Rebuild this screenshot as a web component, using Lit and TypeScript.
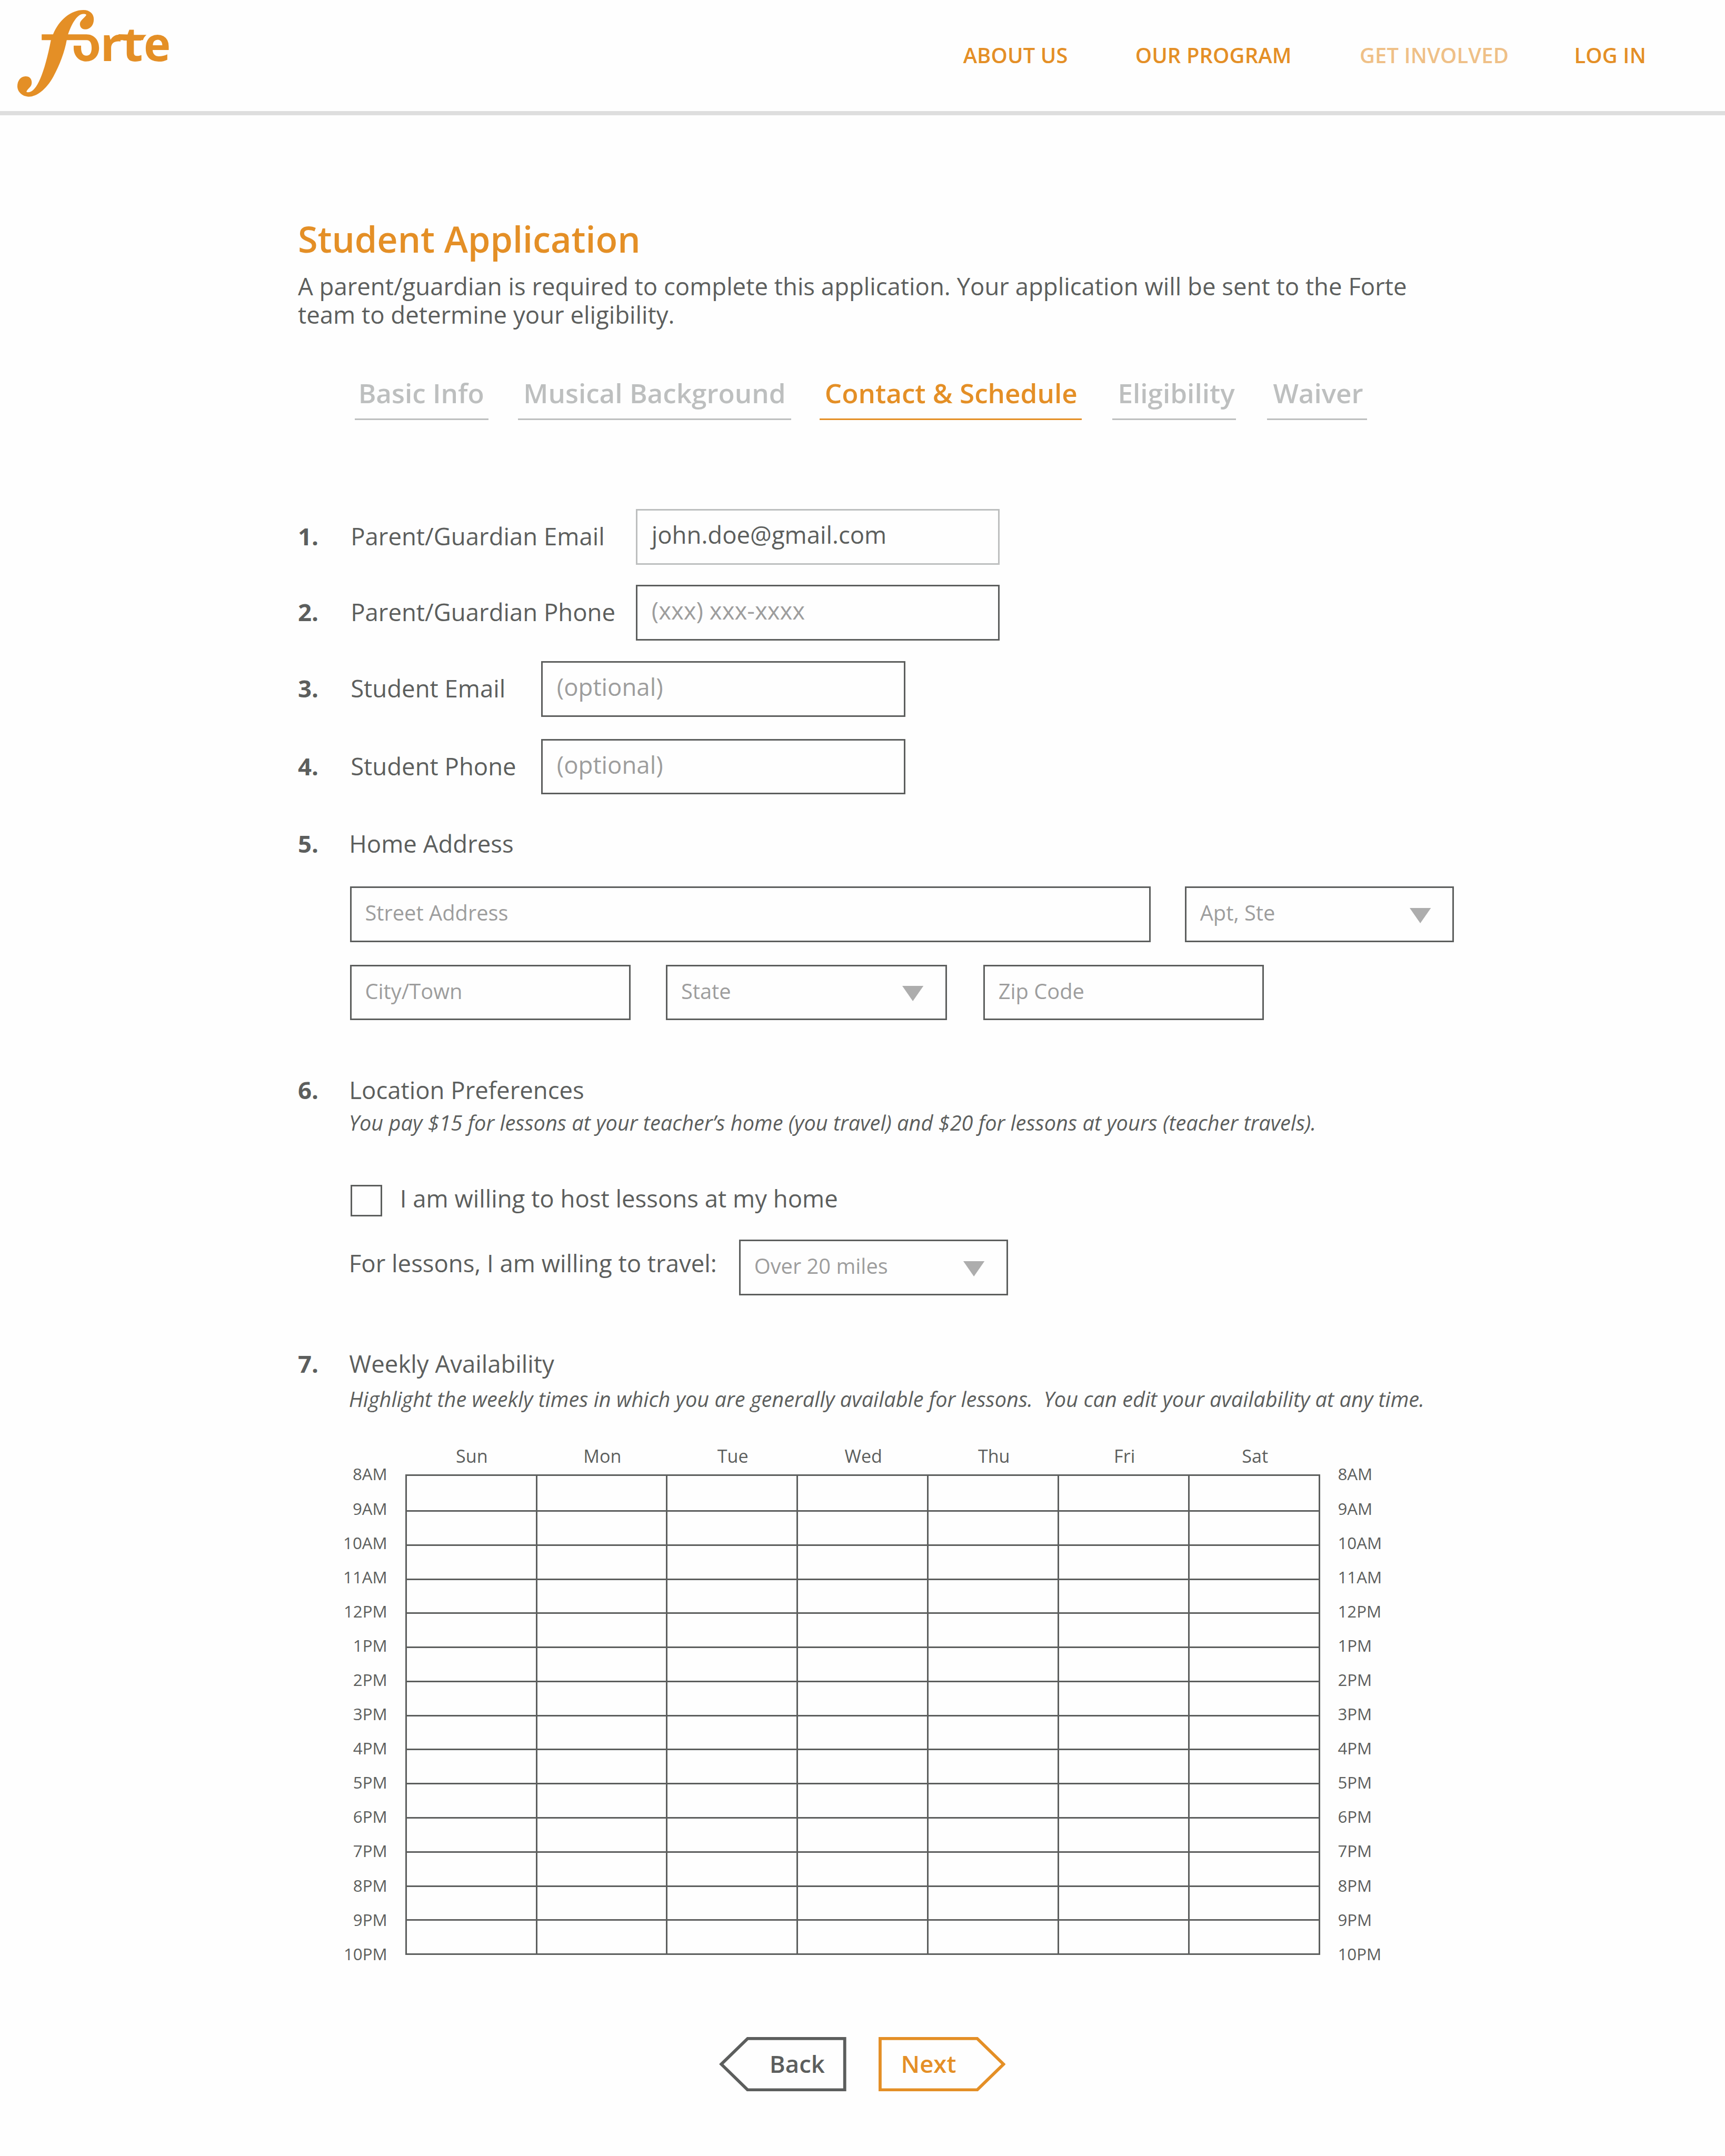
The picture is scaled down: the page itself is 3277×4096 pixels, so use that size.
import { LitElement, html, svg, css, unsafeCSS } from "lit";
import { customElement, property } from "lit/decorators.js";
import { classMap } from "lit/directives/class-map.js";

// The layout is specified on a 4800-unit wide artboard; u() converts to pixels.
const SCALE = 3277 / 4800;
const u = (n: number) => unsafeCSS(`${+(n * SCALE).toFixed(3)}px`);

const tokens = css`
  :host {
    --orange: #e48f26;
    --ink: #5c5e5d;
    --muted: #9d9d9d;
    --line: #bdbfbf;
    box-sizing: border-box;
    font-family: "Open Sans", "Noto Sans", sans-serif;
    font-weight: 400;
    color: var(--ink);
  }
  * {
    box-sizing: border-box;
  }
`;

@customElement("forte-logo")
class ForteLogo extends LitElement {
  static styles = [
    tokens,
    css`
      :host {
        display: block;
      }
      .logo {
        display: block;
        width: ${u(520)};
        height: ${u(309)};
        fill: var(--orange);
      }
      .word {
        font-family: "Open Sans", sans-serif;
        font-weight: 700;
        font-size: 398px;
      }
    `,
  ];
  render() {
    return html`
      <svg class="logo" viewBox="0 0 1560 927" role="img" aria-label="forte">
        <path
          d="M443 287C492 168 590 84 697 84C750 84 783 117 783 160C783 208 755 245 711 245C682 245 667 225 667 200C667 172 702 152 720 126C722 118 710 116 694 116C652 116 603 182 568 287H722C785 287 827 335 827 400C827 465 785 513 720 513C657 513 615 463 615 402V381H677V400C677 442 693 465 721 465C750 465 765 442 765 400C765 358 751 335 724 335H557C540 430 500 540 445 640C385 748 305 807 240 807C185 807 145 765 145 720C145 675 172 637 213 637C247 637 265 658 265 688C265 727 237 732 221 763C220 769 228 770 237 770C305 770 372 610 425 335H348V287Z"
        />
        <text class="word" x="837" y="508">r</text>
        <text class="word" x="1021" y="508">t</text>
        <text class="word" x="1200" y="508" textLength="225" lengthAdjust="spacingAndGlyphs">e</text>
        <path d="M990 286L1064 288V335H1020Q1000 335 985 339Z" />
        <path d="M1100 291H1223Q1202 308 1193 335H1100Z" />
      </svg>
    `;
  }
}

@customElement("forte-field")
class ForteField extends LitElement {
  @property() text = "";
  @property({ type: Boolean }) filled = false;
  @property({ type: Boolean }) select = false;
  @property({ type: Boolean }) small = false;

  static styles = [
    tokens,
    css`
      :host {
        display: block;
        height: ${u(155)};
      }
      .box {
        display: flex;
        align-items: flex-start;
        justify-content: space-between;
        height: 100%;
        border: 3px solid var(--ink);
        padding-left: ${u(38.8)};
        padding-right: ${u(60)};
        color: var(--muted);
        font-size: ${u(66.67)};
        line-height: ${u(134)};
        white-space: nowrap;
      }
      .filled {
        border-color: var(--line);
        color: var(--ink);
      }
      .small {
        padding-left: ${u(37.8)};
        font-size: ${u(58.33)};
        line-height: ${u(137.4)};
      }
      .arrow {
        display: block;
        width: ${u(59)};
        height: ${u(42.5)};
        margin-top: ${u(55.3)};
        fill: #adadad;
      }
    `,
  ];
  render() {
    return html`
      <div class=${classMap({ box: true, filled: this.filled, small: this.small })}>
        <span>${this.text}</span>
        ${this.select
          ? html`<svg class="arrow" viewBox="0 0 59 42.5"><path d="M0 0H59L29.5 42.5Z" /></svg>`
          : null}
      </div>
    `;
  }
}

@customElement("forte-schedule")
class ForteSchedule extends LitElement {
  days = ["Sun", "Mon", "Tue", "Wed", "Thu", "Fri", "Sat"];
  hours = [
    "8AM", "9AM", "10AM", "11AM", "12PM", "1PM", "2PM", "3PM",
    "4PM", "5PM", "6PM", "7PM", "8PM", "9PM", "10PM",
  ];

  static styles = [
    tokens,
    css`
      :host {
        display: flex;
        align-items: flex-start;
      }
      .hours {
        width: ${u(140)};
        padding-top: ${u(34.8)};
        font-size: ${u(45.83)};
        line-height: ${u(95.35)};
      }
      .hours.before {
        text-align: right;
        margin-right: ${u(49.7)};
      }
      .hours.after {
        margin-left: ${u(48.7)};
      }
      .week {
        width: ${u(2546.6)};
      }
      .days {
        display: grid;
        grid-template-columns: repeat(7, 1fr);
        padding-left: ${u(4)};
        font-size: ${u(50)};
        line-height: ${u(62)};
        text-align: center;
        margin-bottom: ${u(20)};
      }
      .cells {
        display: grid;
        grid-template-columns: repeat(7, 1fr);
        grid-template-rows: ${u(100)} repeat(13, ${u(94.9)});
        border-top: 3px solid var(--ink);
        border-left: 3px solid var(--ink);
      }
      .cell {
        border-right: 3px solid var(--ink);
        border-bottom: 3px solid var(--ink);
      }
    `,
  ];
  render() {
    const labels = this.hours.map((h) => html`<div>${h}</div>`);
    const cells = this.hours.slice(1).flatMap(() => this.days.map(() => html`<div class="cell"></div>`));
    return html`
      <div class="hours before">${labels}</div>
      <div class="week">
        <div class="days">${this.days.map((d) => html`<div>${d}</div>`)}</div>
        <div class="cells">${cells}</div>
      </div>
      <div class="hours after">${labels}</div>
    `;
  }
}

@customElement("forte-step-button")
class ForteStepButton extends LitElement {
  @property() label = "";
  @property({ type: Boolean }) forward = false;

  static styles = [
    tokens,
    css`
      :host {
        display: block;
      }
      .btn {
        display: grid;
        width: ${u(354)};
        height: ${u(151.3)};
        color: var(--ink);
        font-size: ${u(66.67)};
        font-weight: 600;
        line-height: ${u(146.6)};
      }
      .btn.forward {
        color: var(--orange);
      }
      .shape,
      .label {
        grid-area: 1 / 1;
      }
      .shape {
        display: block;
        width: 100%;
        height: 100%;
        fill: none;
        stroke: currentColor;
        stroke-width: 8.5;
      }
      .label {
        padding-left: ${u(140)};
      }
      .forward .label {
        padding-left: ${u(62.7)};
      }
    `,
  ];
  render() {
    const d = this.forward
      ? "M4.3 4.3H274.5L347.8 75.6L274.5 147H4.3Z"
      : "M349.7 4.3H79.5L6.2 75.6L79.5 147H349.7Z";
    return html`
      <div class=${classMap({ btn: true, forward: this.forward })}>
        <svg class="shape" viewBox="0 0 354 151.3">${svg`<path d=${d} />`}</svg>
        <span class="label">${this.label}</span>
      </div>
    `;
  }
}

@customElement("app-root")
class AppRoot extends LitElement {
  nav = ["ABOUT US", "OUR PROGRAM", "GET INVOLVED", "LOG IN"];
  tabs = [
    { id: "basic", text: "Basic Info" },
    { id: "musical", text: "Musical Background" },
    { id: "contact", text: "Contact & Schedule" },
    { id: "eligibility", text: "Eligibility" },
    { id: "waiver", text: "Waiver" },
  ];

  static styles = [
    tokens,
    css`
      :host {
        display: block;
        width: ${u(4800)};
        height: 4096px;
        overflow: hidden;
        background: #fefefe;
        font-size: ${u(66.67)};
      }
      .header {
        display: flex;
        height: ${u(309.7)};
      }
      .nav {
        display: grid;
        grid-template-columns: ${u(479)} ${u(624.5)} ${u(597)} ${u(419)};
        margin-left: ${u(2160)};
        color: var(--orange);
        font-size: ${u(58.4)};
        font-weight: 600;
        line-height: ${u(308.6)};
        letter-spacing: 0.12px;
        white-space: nowrap;
      }
      .current {
        opacity: 0.55;
      }
      .rule {
        height: ${u(11)};
        background: #dedede;
      }
      .main {
        padding: ${u(277.1)} 0 0 ${u(829)};
      }
      .title {
        margin: 0;
        color: var(--orange);
        font-size: ${u(100)};
        font-weight: 600;
        line-height: ${u(136)};
      }
      .intro {
        width: ${u(3200)};
        margin: ${u(21.4)} 0 0;
        line-height: ${u(80)};
      }
      .tabs {
        display: flex;
        margin: ${u(128.1)} 0 0 ${u(158)};
        color: var(--line);
        font-size: ${u(75)};
        font-weight: 600;
        line-height: ${u(102)};
        white-space: nowrap;
      }
      .tab {
        padding-bottom: ${u(18.9)};
        border-bottom: 3px solid var(--line);
      }
      .basic {
        width: ${u(372.5)};
        padding-left: ${u(10)};
      }
      .musical {
        width: ${u(760)};
        margin-left: ${u(81.5)};
        padding-left: ${u(15.5)};
      }
      .contact {
        width: ${u(730)};
        margin-left: ${u(79.5)};
        padding-left: ${u(14.5)};
        color: var(--orange);
        border-bottom-color: var(--orange);
      }
      .eligibility {
        width: ${u(345)};
        margin-left: ${u(84)};
        padding-left: ${u(16)};
      }
      .waiver {
        width: ${u(278.5)};
        margin-left: ${u(86.5)};
        padding-left: ${u(16.5)};
      }
      .row {
        display: flex;
        line-height: ${u(151.6)};
        margin-top: ${u(56.2)};
      }
      .row.first {
        margin-top: ${u(247.6)};
      }
      .row.third {
        margin-top: ${u(57.2)};
      }
      .row.fourth {
        margin-top: ${u(61.5)};
      }
      .num {
        width: ${u(146.8)};
        font-weight: 700;
      }
      .label {
        width: ${u(794)};
      }
      .label.student {
        width: ${u(530.4)};
      }
      .entry {
        width: ${u(1012.5)};
      }
      .heading {
        display: flex;
        line-height: ${u(90)};
      }
      .heading .num {
        width: ${u(142.6)};
      }
      .address {
        margin-top: ${u(91)};
      }
      .location {
        margin-top: ${u(149.3)};
      }
      .weekly {
        margin-top: ${u(145.5)};
      }
      .note {
        margin: 0 0 0 ${u(141.9)};
        font-size: ${u(58.23)};
        font-style: italic;
        line-height: ${u(80)};
        white-space: pre;
      }
      .location-note {
        margin-top: ${u(6.3)};
      }
      .weekly-note {
        margin-top: ${u(14.6)};
      }
      .fields {
        display: flex;
        margin: ${u(75.3)} 0 0 ${u(144.6)};
      }
      .fields.second {
        margin-top: ${u(62)};
      }
      .street {
        width: ${u(2229)};
        margin-right: ${u(94.4)};
      }
      .apt {
        width: ${u(748.5)};
      }
      .city,
      .state,
      .zip {
        width: ${u(781.5)};
      }
      .city {
        margin-right: ${u(98)};
      }
      .state {
        margin-right: ${u(101.4)};
      }
      .host {
        display: flex;
        margin: ${u(131.7)} 0 0 ${u(146.5)};
        line-height: ${u(74.6)};
      }
      .check {
        width: ${u(88)};
        height: ${u(88)};
        margin-right: ${u(49.4)};
        border: 3px solid var(--ink);
      }
      .travel {
        display: flex;
        margin: ${u(64.9)} 0 0 ${u(141.9)};
        line-height: ${u(129.6)};
      }
      .travel-label {
        width: ${u(1085.6)};
      }
      .distance {
        width: ${u(748)};
      }
      .schedule {
        margin: ${u(86)} 0 0 ${u(108.6)};
      }
      .actions {
        display: flex;
        gap: ${u(89)};
        margin: ${u(182.6)} 0 0 ${u(1172.3)};
      }
    `,
  ];

  render() {
    return html`
      <header class="header">
        <forte-logo></forte-logo>
        <nav class="nav">
          ${this.nav.map((t) => html`<span class=${classMap({ current: t === "GET INVOLVED" })}>${t}</span>`)}
        </nav>
      </header>
      <div class="rule"></div>
      <main class="main">
        <h1 class="title">Student Application</h1>
        <p class="intro">
          A parent/guardian is required to complete this application. Your application will be sent to the Forte team to
          determine your eligibility.
        </p>
        <div class="tabs">${this.tabs.map((t) => html`<div class="tab ${t.id}">${t.text}</div>`)}</div>

        <div class="row first">
          <span class="num">1.</span><span class="label">Parent/Guardian Email</span>
          <forte-field class="entry" text="john.doe@gmail.com" filled></forte-field>
        </div>
        <div class="row">
          <span class="num">2.</span><span class="label">Parent/Guardian Phone</span>
          <forte-field class="entry" text="(xxx) xxx-xxxx"></forte-field>
        </div>
        <div class="row third">
          <span class="num">3.</span><span class="label student">Student Email</span>
          <forte-field class="entry" text="(optional)"></forte-field>
        </div>
        <div class="row fourth">
          <span class="num">4.</span><span class="label student">Student Phone</span>
          <forte-field class="entry" text="(optional)"></forte-field>
        </div>

        <div class="heading address"><span class="num">5.</span><span>Home Address</span></div>
        <div class="fields">
          <forte-field class="street" text="Street Address" small></forte-field>
          <forte-field class="apt" text="Apt, Ste" small select></forte-field>
        </div>
        <div class="fields second">
          <forte-field class="city" text="City/Town" small></forte-field>
          <forte-field class="state" text="State" small select></forte-field>
          <forte-field class="zip" text="Zip Code" small></forte-field>
        </div>

        <div class="heading location"><span class="num">6.</span><span>Location Preferences</span></div>
        <p class="note location-note">You pay $15 for lessons at your teacher’s home (you travel) and $20 for lessons at yours (teacher travels).</p>
        <div class="host"><span class="check"></span><span>I am willing to host lessons at my home</span></div>
        <div class="travel">
          <span class="travel-label">For lessons, I am willing to travel:</span>
          <forte-field class="distance" text="Over 20 miles" small select></forte-field>
        </div>

        <div class="heading weekly"><span class="num">7.</span><span>Weekly Availability</span></div>
        <p class="note weekly-note">Highlight the weekly times in which you are generally available for lessons.  You can edit your availability at any time.</p>
        <forte-schedule class="schedule"></forte-schedule>

        <div class="actions">
          <forte-step-button label="Back"></forte-step-button>
          <forte-step-button label="Next" forward></forte-step-button>
        </div>
      </main>
    `;
  }
}
